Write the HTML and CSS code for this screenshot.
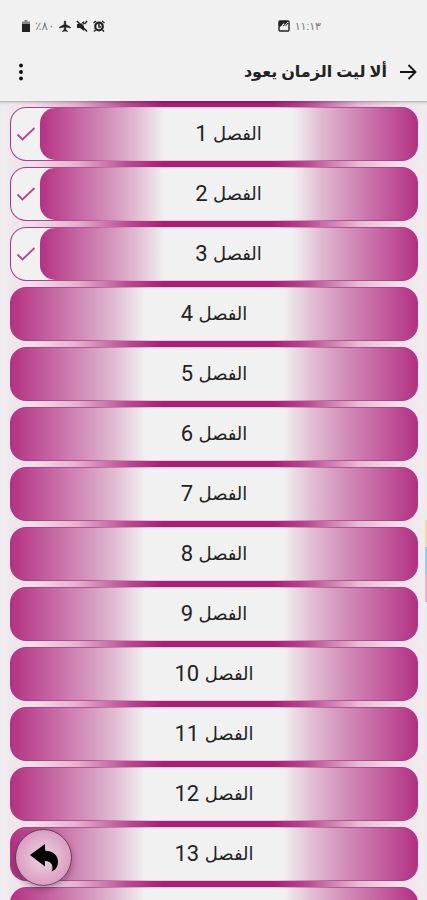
FILE: index.html
```html
<!DOCTYPE html>
<html lang="ar" dir="rtl">
<head>
<meta charset="utf-8">
<meta name="viewport" content="width=device-width, initial-scale=1">
<title>ألا ليت الزمان يعود</title>
<link rel="stylesheet" href="styles.css">
</head>
<body>
<div class="app">
  <div class="status">
    <div class="status-side">
      <span>١١:١٣</span>
      <svg width="12" height="12" viewBox="0 0 12 12"><rect x="1" y="1" width="10" height="10" rx="1" fill="#eee" stroke="#222" stroke-width="1.400"/><path d="M1 7V1h9L8 4 5 3.500 3.500 6z" fill="#222"/><path d="M5 6l2-1.500 1 1 2-2.500" fill="none" stroke="#222"/></svg>
    </div>
    <div class="status-side">
      <svg width="12" height="12" viewBox="0 0 12 12"><circle cx="6" cy="6.500" r="3.800" fill="#eee" stroke="#222" stroke-width="2.200"/><path d="M.5 3l2.500-2M11.500 3L9 1M2.500 10l-1.500 1.500M9.500 10l1.500 1.500M6 4v3h2" fill="none" stroke="#222" stroke-width="1.500"/></svg>
      <svg width="12" height="12" viewBox="0 0 12 12"><path d="M1 4h3l4-3v10L4 8H1z" fill="#222"/><path d="M3 0l9 10" stroke="#eee" stroke-width="1"/><path d="M1 1l10 10.500M8.500 4l2.500-3" stroke="#222" stroke-width="1.500"/></svg>
      <svg width="12" height="12" viewBox="0 0 12 12"><path d="M5.200 1.500Q6 0 6.800 1.500V4.500L11.500 7v1L6.800 7v2.500L8.500 11v.6L6 11l-2.500.6V11l1.700-1.500V7L.5 8V7l4.700-2.500z" fill="#222" stroke="#222" stroke-width=".5"/></svg>
      <span class="battery-text" dir="ltr">٪٨٠</span>
      <svg width="8" height="12" viewBox="0 0 8 12"><path d="M2.500 0h3v1.500H8V4H0V1.500h2.500z" fill="#888"/><path d="M0 4h8v8H0z" fill="#222"/></svg>
    </div>
  </div>
  <header class="bar">
    <button class="icon-button" type="button" aria-label="رجوع">
      <svg width="18" height="18" viewBox="0 0 18 18"><path d="M1 9h15M9.500 2l7 7-7 7" fill="none" stroke="#151515" stroke-width="1.800"/></svg>
    </button>
    <h1>ألا ليت الزمان يعود</h1>
    <button class="icon-button menu" type="button" aria-label="القائمة">
      <svg width="6" height="18" viewBox="0 0 6 18"><circle cx="3" cy="2.500" r="2" fill="#151515"/><circle cx="3" cy="9" r="2" fill="#151515"/><circle cx="3" cy="15.500" r="2" fill="#151515"/></svg>
    </button>
  </header>
  <main class="chapters">
    <a class="chapter read" href="#c1"><span class="label"><span class="word">الفصل</span> 1</span><span class="done"><svg width="20" height="16" viewBox="0 0 20 16"><path d="M1.500 8.500l5 5L18.500 2" fill="none" stroke="#b8468b" stroke-width="1.800"/></svg></span></a>
    <a class="chapter read" href="#c2"><span class="label"><span class="word">الفصل</span> 2</span><span class="done"><svg width="20" height="16" viewBox="0 0 20 16"><path d="M1.500 8.500l5 5L18.500 2" fill="none" stroke="#b8468b" stroke-width="1.800"/></svg></span></a>
    <a class="chapter read" href="#c3"><span class="label"><span class="word">الفصل</span> 3</span><span class="done"><svg width="20" height="16" viewBox="0 0 20 16"><path d="M1.500 8.500l5 5L18.500 2" fill="none" stroke="#b8468b" stroke-width="1.800"/></svg></span></a>
    <a class="chapter" href="#c4"><span class="label"><span class="word">الفصل</span> 4</span></a>
    <a class="chapter" href="#c5"><span class="label"><span class="word">الفصل</span> 5</span></a>
    <a class="chapter" href="#c6"><span class="label"><span class="word">الفصل</span> 6</span></a>
    <a class="chapter" href="#c7"><span class="label"><span class="word">الفصل</span> 7</span></a>
    <a class="chapter" href="#c8"><span class="label"><span class="word">الفصل</span> 8</span></a>
    <a class="chapter" href="#c9"><span class="label"><span class="word">الفصل</span> 9</span></a>
    <a class="chapter" href="#c10"><span class="label"><span class="word">الفصل</span> 10</span></a>
    <a class="chapter" href="#c11"><span class="label"><span class="word">الفصل</span> 11</span></a>
    <a class="chapter" href="#c12"><span class="label"><span class="word">الفصل</span> 12</span></a>
    <a class="chapter" href="#c13"><span class="label"><span class="word">الفصل</span> 13</span></a>
    <a class="chapter" href="#c14" aria-hidden="true"><span class="label"></span></a>
  </main>
  <div class="edge"></div>
  <button class="fab" type="button" aria-label="عودة">
    <svg width="28" height="28" viewBox="0 0 28 28"><path d="M0 11L15 0v6.500C24 7 28 12 28 18c0 4-2 8-6.500 9.500C24 23 22 17 15 17v5.500z" fill="#000"/></svg>
  </button>
</div>
</body>
</html>
```
FILE: styles.css
```css
* { box-sizing: border-box; }

body {
  margin: 0;
  background: #f1f1f1;
  color: #222;
  font-family: Roboto, "DejaVu Sans", sans-serif;
}

.app {
  position: relative;
  display: flex;
  flex-direction: column;
  height: 100vh;
  overflow: hidden;
}

.status {
  display: flex;
  justify-content: space-between;
  align-items: center;
  height: 44px;
  padding: 8px 106px 0 22px;
  font-size: 11px;
  color: #777;
}

.status-side {
  display: flex;
  align-items: center;
  gap: 5px;
}

.battery-text { font-size: 12px; }

.bar {
  display: flex;
  align-items: center;
  height: 57px;
  padding: 0 10px 2px 16px;
  gap: 12px;
  flex: none;
}

.bar h1 {
  flex: 1;
  margin: 0;
  font-size: 16px;
  line-height: 28px;
  font-weight: 700;
  color: #222;
}

.icon-button {
  display: flex;
  justify-content: center;
  padding: 0;
  border: 0;
  background: none;
}

.menu { width: 10px; }

.chapters {
  flex: 1;
  min-height: 0;
  display: flex;
  flex-direction: column;
  gap: 6px;
  padding: 6px 9px 6px 10px;
  overflow-y: auto;
  scrollbar-width: none;
  box-shadow: inset 0 3px 3px -2px rgba(0, 0, 0, 0.3);
  background: linear-gradient(to right, #efedef 0%, #eedfe8 8%, #e0b3cf 18%, #b84a90 30%, #a91f77 38%, #a91f77 64%, #b84a90 72%, #e3bdd4 84%, #f0e3eb 94%, #f0edef 100%);
}

.chapter {
  display: flex;
  flex: none;
  height: 54px;
  padding: 1px;
  border-radius: 16px;
  overflow: hidden;
  background: linear-gradient(to right, #b33282 0%, #bd4f95 20%, #ecc8dd 35%, #ecc8dd 65%, #bd4f95 80%, #b33282 100%);
  color: #222;
  text-decoration: none;
}

.label {
  display: flex;
  flex: 1;
  align-items: center;
  justify-content: center;
  font-size: 22px;
  line-height: 30px;
  border-radius: 15px;
  white-space: pre;
  background: linear-gradient(to right, #b33282 0%, #c461a0 9%, #d18ab7 17%, #dfb8d0 25%, #f1f1f1 33%, #f1f1f1 67%, #dfb8d0 75%, #d18ab7 83%, #c461a0 91%, #b33282 100%);
}

.word { font-size: 18px; }

.read .label {
  position: relative;
  margin-left: -15px;
}

.done {
  display: flex;
  width: 44px;
  padding-right: 15px;
  align-items: center;
  justify-content: center;
  border-radius: 15px 0 0 15px;
  background: #f1f1f1;
}

.edge {
  position: absolute;
  right: 0;
  top: 520px;
  width: 2px;
  height: 82px;
  background: linear-gradient(#f3dfa0 33%, #8fd3e8 33%, #8fd3e8 66%, #f0b0c8 66%);
}

.fab {
  position: absolute;
  left: 15px;
  bottom: 14px;
  display: flex;
  align-items: center;
  justify-content: center;
  width: 57px;
  height: 57px;
  padding: 0;
  border: 1px solid #6b3a5a;
  border-radius: 50%;
  background: radial-gradient(circle, #eed3e3 0%, #e0aecb 50%, #cf83b2 100%);
  box-shadow: 0 3px 6px rgba(0, 0, 0, 0.3);
}
```
